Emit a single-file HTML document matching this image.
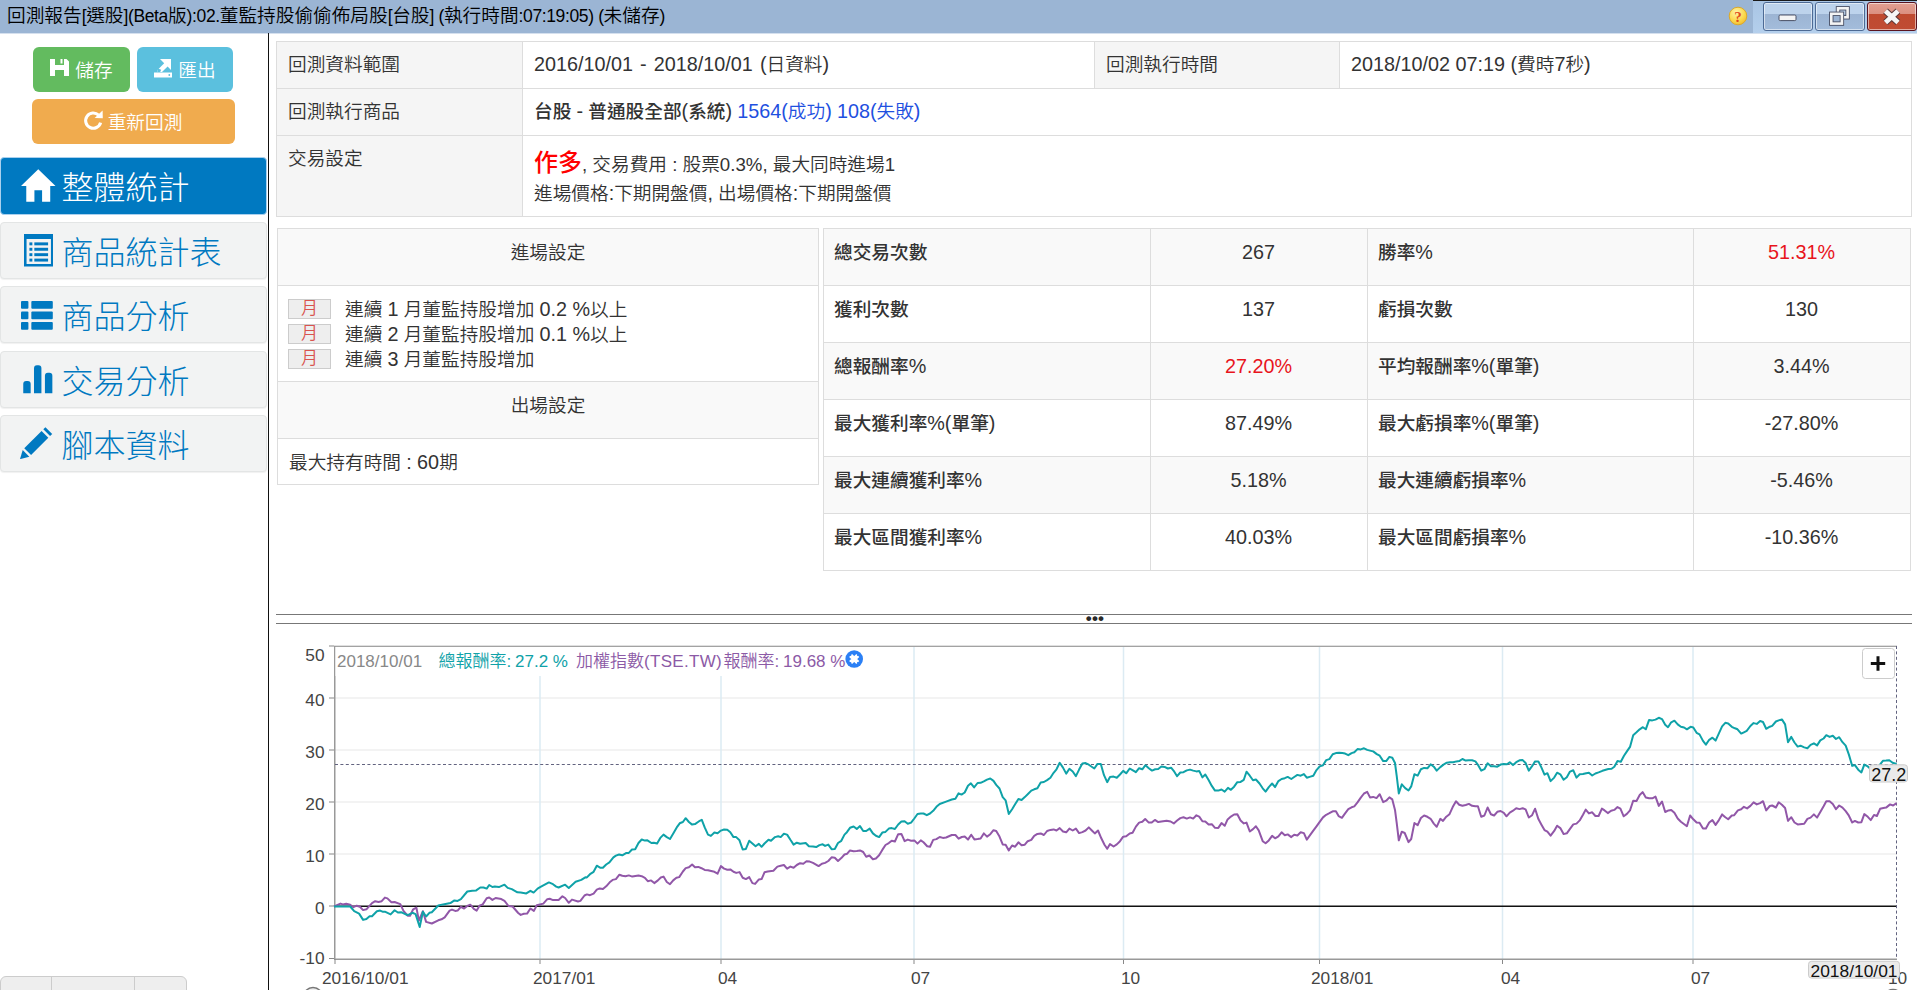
<!DOCTYPE html>
<html lang="zh-Hant"><head><meta charset="utf-8"><title>回測報告</title>
<style>
*{box-sizing:border-box;margin:0;padding:0}
html,body{width:1917px;height:990px;overflow:hidden;background:#fff}
body{position:relative;font-family:"Liberation Sans","Noto Sans CJK TC",sans-serif;color:#333;font-size:18.67px;font-weight:350}
.abs{position:absolute}
#titlebar{left:0;top:0;width:1917px;height:33px;background:#9bb5d4}
#titletext{left:7px;top:0;height:33px;line-height:32px;font-size:18.67px;color:#000;white-space:nowrap}
.t{font-size:17.5px;letter-spacing:-0.37px}
.e{font-size:1.06em}
#tbright{left:1753px;top:0;width:164px;height:33px;background:linear-gradient(#a9c5e4,#b4cfec);border-top:1px solid #1a1a1a}
.wbtn{top:2px;width:50px;height:29px;border:1px solid #4d6a94;border-radius:3px;box-shadow:inset 0 0 0 1px rgba(255,255,255,.55);background:linear-gradient(#bdd3ec 0,#bdd3ec 40%,#9cb4d3 41%,#a3bcdb 100%)}
#wclose{border-color:#5a1420;background:linear-gradient(#e2a092 0,#db8f80 40%,#bf4a30 41%,#c04c33 100%)}
#divider{left:268px;top:33px;width:1px;height:957px;background:#111}
.btn{color:#fff;border-radius:6px;height:45px;line-height:47px;text-align:center;font-size:18.67px;white-space:nowrap}
.nav{left:0;width:267px;height:57px;border:1px solid #e3e5e5;border-radius:4px;background:#f2f3f3;box-shadow:0 1px 1px rgba(0,0,0,.06);color:#0079c1;font-size:32px;font-weight:300;white-space:nowrap}
.nav.act{background:#0079c1;border-color:#a9d0ee;color:#fff;box-shadow:none;height:58px;margin-top:-1px}
.nav span{position:absolute;left:60.5px;top:1.5px;line-height:57px}
.nav svg{position:absolute}
table{border-collapse:collapse;position:absolute;table-layout:fixed}
td{border:1px solid #ddd;vertical-align:top;white-space:nowrap;overflow:hidden}
#t1 td{padding:9px 11px 0 11px;line-height:27px}
#t1 tr:first-child td:nth-child(2){word-spacing:1.6px}
#t1 td.l{background:#f5f5f5}
#t3 td{padding:10px 11px 0 10px;line-height:27px;height:57px}
#t3 td.l{font-weight:500}
b{font-weight:500}
#t3 td.v{text-align:center}
#t3 tr:nth-child(odd) td{background:#f9f9f9}
.red{color:#e8141c}
.mon{display:inline-block;width:43px;height:20px;border:1px solid #ccc;background:#eee;color:#d9534f;text-align:center;line-height:18px;font-size:17px;vertical-align:top;margin-right:14px;margin-top:2px}
</style></head><body>

<div id="titlebar" class="abs"></div><div class="abs" style="left:0;top:33px;width:1917px;height:1px;background:#d5e0ee"></div>
<div id="titletext" class="abs">回測報告<span class="t">[</span>選股<span class="t">](Beta</span>版<span class="t">):02.</span>董監持股偷偷佈局股<span class="t">[</span>台股<span class="t">] (</span>執行時間<span class="t">:07:19:05) (</span>未儲存<span class="t">)</span></div>
<div id="tbright" class="abs"></div>
<svg class="abs" style="left:1727px;top:5px" width="22" height="22" viewBox="0 0 22 22">
<defs><radialGradient id="qg" cx="0.4" cy="0.3" r="0.8"><stop offset="0" stop-color="#fff3a8"/><stop offset="0.6" stop-color="#fbd84c"/><stop offset="1" stop-color="#f0b429"/></radialGradient></defs>
<circle cx="11" cy="11" r="8.8" fill="url(#qg)" stroke="#dca92a" stroke-width="1"/>
<text x="11" y="16.5" text-anchor="middle" font-family="Liberation Serif,serif" font-weight="bold" font-size="15" fill="#e04a1c">?</text></svg>
<div class="abs wbtn" style="left:1763px"></div>
<div class="abs wbtn" style="left:1815px"></div>
<div class="abs wbtn" id="wclose" style="left:1867px"></div>
<svg class="abs" style="left:1763px;top:2px" width="154" height="29" viewBox="0 0 154 29">
<rect x="16" y="13" width="17" height="5.6" rx="1.2" fill="#f4f4f4" stroke="#4a5166" stroke-width="1"/>
<g fill="none" stroke="#4a5166" stroke-width="4.4"><rect x="75" y="6.3" width="9.6" height="9"/></g>
<g fill="none" stroke="#f4f4f4" stroke-width="2.6"><rect x="75" y="6.3" width="9.6" height="9"/></g>
<rect x="67" y="11" width="13" height="12" fill="#9cb4d3"/>
<g fill="none" stroke="#4a5166" stroke-width="4.4"><rect x="68.3" y="11.8" width="10.6" height="9.8"/></g>
<g fill="none" stroke="#f4f4f4" stroke-width="2.6"><rect x="68.3" y="11.8" width="10.6" height="9.8"/></g>
<g stroke-linecap="butt"><path d="M122.5 9 L135 20.5 M135 9 L122.5 20.5" stroke="#5b3a3a" stroke-width="6.8" fill="none"/><path d="M122.5 9 L135 20.5 M135 9 L122.5 20.5" stroke="#f6f6f6" stroke-width="4.8" fill="none"/></g>
</svg>

<div id="divider" class="abs"></div>
<div class="abs btn" style="left:33px;top:47px;width:97px;background:#63bb5f"><span style="margin-left:25px">儲存</span></div>
<svg class="abs" style="left:50px;top:59px" width="19" height="17" viewBox="0 0 19 17"><path d="M0 0H5V6H14V0H16.5L19 2.5V17H14V11H5V17H0Z M10.5 0H12.5V4.5H10.5Z" fill="#fff"/></svg>
<div class="abs btn" style="left:137px;top:47px;width:96px;background:#5bc0de"><span style="margin-left:24px">匯出</span></div>
<svg class="abs" style="left:154px;top:59px" width="19" height="19" viewBox="0 0 19 19"><path d="M0 13.5H18V18.5H0Z" fill="#fff"/><circle cx="15.3" cy="16" r="0.9" fill="#5bc0de"/><path d="M6 0H17V11L13.6 7.6L8 13H3.5V11L10.2 4.2Z" fill="#fff"/><path d="M3.5 9.2L7.2 10.8L6.2 13H3.5Z" fill="#5bc0de"/></svg>
<div class="abs btn" style="left:32px;top:99px;width:203px;background:#f0ab4e"><span style="margin-left:23px">重新回測</span></div>
<svg class="abs" style="left:83px;top:110px" width="21" height="21" viewBox="0 0 21 21"><path d="M17.6 12.6A7.6 7.6 0 1 1 15.6 5.2" fill="none" stroke="#fff" stroke-width="3.1"/><path d="M11.6 8L19.8 8.2L19.6 0.4Z" fill="#fff"/></svg>

<div class="abs nav act" style="top:158px"><svg style="left:20px;top:10.5px" width="34.5" height="33" viewBox="0 0 36 34"><path d="M18 0L36 17.5H30.5V34H22V22H14V34H5.5V17.5H0Z" fill="#fff"/></svg><span>整體統計</span></div>
<div class="abs nav" style="top:222px"><svg style="left:22.5px;top:11px" width="29.5" height="32.5" viewBox="0 0 30 33"><path d="M0 0H30V33H0Z M2.6 5H27.4V30.4H2.6Z" fill="#0079c1" fill-rule="evenodd"/><g fill="#0079c1"><rect x="5.5" y="8.5" width="3" height="3"/><rect x="10.5" y="8.5" width="14" height="3"/><rect x="5.5" y="14" width="3" height="3"/><rect x="10.5" y="14" width="14" height="3"/><rect x="5.5" y="19.5" width="3" height="3"/><rect x="10.5" y="19.5" width="14" height="3"/><rect x="5.5" y="25" width="3" height="3"/><rect x="10.5" y="25" width="14" height="3"/></g></svg><span>商品統計表</span></div>
<div class="abs nav" style="top:286px"><svg style="left:20px;top:14px" width="32.2" height="29.3" viewBox="0 0 33 30"><g fill="#0079c1"><rect x="0" y="0" width="7.6" height="7.8" rx="1"/><rect x="10.6" y="0" width="22" height="7.8" rx="1"/><rect x="0" y="10.8" width="7.6" height="7.8" rx="1"/><rect x="10.6" y="10.8" width="22" height="7.8" rx="1"/><rect x="0" y="21.6" width="7.6" height="7.8" rx="1"/><rect x="10.6" y="21.6" width="22" height="7.8" rx="1"/></g></svg><span>商品分析</span></div>
<div class="abs nav" style="top:351px"><svg style="left:22.3px;top:13px" width="29.8" height="29.3" viewBox="0 0 30 30"><g fill="#0079c1"><path d="M0 29V19.5Q0 16.5 3 16.5H4.6Q7.6 16.5 7.6 19.5V29Z"/><path d="M11 29V3.5Q11 0.3 14 0.3H15.6Q18.6 0.3 18.6 3.5V29Z"/><path d="M22.2 29V11Q22.2 8 25.2 8H26.8Q29.8 8 29.8 11V29Z"/></g></svg><span>交易分析</span></div>
<div class="abs nav" style="top:415px"><svg style="left:19.3px;top:11px" width="33" height="32.3" viewBox="0 0 34 33"><g fill="#0079c1"><path d="M0 33L2.8 23.6L9.6 30.4Z"/><path d="M4.4 21.8L22.2 4L29.2 11L11.4 28.8Z"/><path d="M24 2.2L26.2 0L33.2 7L31 9.2Z"/></g></svg><span>腳本資料</span></div>

<div class="abs" style="left:0;top:976px;width:187px;height:30px;border:1px solid #ccc;border-radius:6px;background:#eee"></div>
<div class="abs" style="left:51px;top:976px;width:1px;height:20px;background:#ccc"></div>
<div class="abs" style="left:134px;top:976px;width:1px;height:20px;background:#ccc"></div>

<table id="t1" style="left:276px;top:41px;width:1635px">
<colgroup><col style="width:246px"><col style="width:572px"><col style="width:245px"><col style="width:572px"></colgroup>
<tr style="height:47px"><td class="l">回測資料範圍</td><td><span class="e">2016/10/01 - 2018/10/01 (</span>日資料<span class="e">)</span></td><td class="l">回測執行時間</td><td><span class="e">2018/10/02 07:19 (</span>費時<span class="e">7</span>秒<span class="e">)</span></td></tr>
<tr style="height:47px"><td class="l">回測執行商品</td><td colspan="3"><b>台股 <span class="e">-</span> 普通股全部<span class="e">(</span>系統<span class="e">)</span></b> <span style="color:#1e50e0"><span class="e">1564(</span>成功<span class="e">)</span></span> <span style="color:#1e50e0"><span class="e">108(</span>失敗<span class="e">)</span></span></td></tr>
<tr style="height:81px"><td class="l">交易設定</td><td colspan="3" style="padding-top:12px"><div style="line-height:30px"><b class="red" style="font-size:24px;color:#f00">作多</b>, 交易費用 : 股票0.3%, 最大同時進場1</div><div style="line-height:27px">進場價格<span class="e">:</span>下期開盤價<span class="e">,</span> 出場價格<span class="e">:</span>下期開盤價</div></td></tr>
</table>

<div class="abs" style="left:277px;top:228px;width:542px;height:257px;border:1px solid #ddd;background:#fff">
 <div style="height:57px;background:#f9f9f9;border-bottom:1px solid #ddd;text-align:center;line-height:27px;padding-top:10px">進場設定</div>
 <div style="height:96px;border-bottom:1px solid #ddd;padding:11px 0 0 10px;line-height:25px">
  <div><span class="mon">月</span>連續 <span class="e">1</span> 月董監持股增加 <span class="e">0.2 %</span>以上</div>
  <div><span class="mon">月</span>連續 <span class="e">2</span> 月董監持股增加 <span class="e">0.1 %</span>以上</div>
  <div><span class="mon">月</span>連續 <span class="e">3</span> 月董監持股增加</div>
 </div>
 <div style="height:57px;background:#f9f9f9;border-bottom:1px solid #ddd;text-align:center;line-height:27px;padding-top:10px">出場設定</div>
 <div style="padding:10px 0 0 11px;line-height:27px">最大持有時間 <span class="e">: 60</span>期</div>
</div>

<table id="t3" style="left:823px;top:228px;width:1087px">
<colgroup><col style="width:327px"><col style="width:217px"><col style="width:326px"><col style="width:217px"></colgroup>
<tr><td class="l">總交易次數</td><td class="v"><span class="e">267</span></td><td class="l">勝率<span class="e">%</span></td><td class="v red"><span class="e">51.31%</span></td></tr>
<tr><td class="l">獲利次數</td><td class="v"><span class="e">137</span></td><td class="l">虧損次數</td><td class="v"><span class="e">130</span></td></tr>
<tr><td class="l">總報酬率<span class="e">%</span></td><td class="v red"><span class="e">27.20%</span></td><td class="l">平均報酬率<span class="e">%(</span>單筆<span class="e">)</span></td><td class="v"><span class="e">3.44%</span></td></tr>
<tr><td class="l">最大獲利率<span class="e">%(</span>單筆<span class="e">)</span></td><td class="v"><span class="e">87.49%</span></td><td class="l">最大虧損率<span class="e">%(</span>單筆<span class="e">)</span></td><td class="v"><span class="e">-27.80%</span></td></tr>
<tr><td class="l">最大連續獲利率<span class="e">%</span></td><td class="v"><span class="e">5.18%</span></td><td class="l">最大連續虧損率<span class="e">%</span></td><td class="v"><span class="e">-5.46%</span></td></tr>
<tr><td class="l">最大區間獲利率<span class="e">%</span></td><td class="v"><span class="e">40.03%</span></td><td class="l">最大區間虧損率<span class="e">%</span></td><td class="v"><span class="e">-10.36%</span></td></tr>
</table>

<div class="abs" style="left:276px;top:614px;width:1636px;height:1px;background:#777"></div>
<div class="abs" style="left:276px;top:623px;width:1636px;height:1px;background:#777"></div>
<div class="abs" style="left:1080px;top:610px;width:30px;height:18px;line-height:18px;text-align:center;font-size:17px;font-weight:bold;color:#2a2a2a;letter-spacing:0.2px;white-space:nowrap">•••</div>
<svg class="abs" style="left:0;top:0" width="1917" height="990" viewBox="0 0 1917 990" font-family="Liberation Sans, Noto Sans CJK TC, sans-serif">
<rect x="335" y="697.2" width="1562" height="1.6" fill="#f0f0f0"/>
<rect x="335" y="749.2" width="1562" height="1.6" fill="#f0f0f0"/>
<rect x="335" y="801.2" width="1562" height="1.6" fill="#f0f0f0"/>
<rect x="335" y="853.2" width="1562" height="1.6" fill="#f0f0f0"/>
<rect x="539.25" y="647" width="1.5" height="312" fill="#dcebf3"/>
<rect x="539.5" y="959" width="1" height="5" fill="#888"/>
<rect x="720.25" y="647" width="1.5" height="312" fill="#dcebf3"/>
<rect x="720.5" y="959" width="1" height="5" fill="#888"/>
<rect x="913.25" y="647" width="1.5" height="312" fill="#dcebf3"/>
<rect x="913.5" y="959" width="1" height="5" fill="#888"/>
<rect x="1122.75" y="647" width="1.5" height="312" fill="#dcebf3"/>
<rect x="1123.0" y="959" width="1" height="5" fill="#888"/>
<rect x="1318.75" y="647" width="1.5" height="312" fill="#dcebf3"/>
<rect x="1319.0" y="959" width="1" height="5" fill="#888"/>
<rect x="1501.75" y="647" width="1.5" height="312" fill="#dcebf3"/>
<rect x="1502.0" y="959" width="1" height="5" fill="#888"/>
<rect x="1692.25" y="647" width="1.5" height="312" fill="#dcebf3"/>
<rect x="1692.5" y="959" width="1" height="5" fill="#888"/>
<rect x="334" y="645.7" width="1563" height="1.2" fill="#999"/>
<rect x="334" y="646" width="1.5" height="314" fill="#999"/>
<rect x="334" y="958.5" width="1563" height="1.5" fill="#999"/>
<rect x="334.5" y="959" width="1" height="5" fill="#888"/>
<rect x="329" y="645.5" width="5" height="1" fill="#888"/>
<rect x="329" y="697.5" width="5" height="1" fill="#888"/>
<rect x="329" y="749.5" width="5" height="1" fill="#888"/>
<rect x="329" y="801.5" width="5" height="1" fill="#888"/>
<rect x="329" y="853.5" width="5" height="1" fill="#888"/>
<rect x="329" y="905.5" width="5" height="1" fill="#888"/>
<rect x="329" y="958.0" width="5" height="1" fill="#888"/>
<rect x="335" y="905.5" width="1562" height="1.5" fill="#111"/>
<path d="M335 764.5H1897" stroke="#62637f" stroke-width="1" stroke-dasharray="3 2.4" fill="none"/>
<path d="M1896.5 646V959" stroke="#62637f" stroke-width="1" stroke-dasharray="3 2.4" fill="none"/>
<path d="M334.0,906.5 L340.5,903.6 L342.9,904.4 L346.2,903.8 L350.2,904.7 L353.4,907.2 L356.7,905.7 L359.9,906.8 L363.1,910.1 L366.4,909.3 L372.0,903.1 L375.2,901.2 L378.5,902.0 L381.7,901.2 L384.9,897.6 L387.4,898.4 L391.4,902.3 L394.6,902.0 L400.3,904.1 L403.5,910.9 L407.6,915.7 L410.0,915.7 L413.2,909.3 L416.4,907.6 L418.9,920.6 L422.9,911.2 L426.1,921.9 L431.8,923.5 L438.3,920.3 L441.5,919.3 L444.7,917.3 L449.6,910.6 L452.0,909.6 L455.2,910.9 L457.6,910.6 L460.9,906.8 L464.1,908.5 L467.3,906.0 L470.3,904.7 L473.8,908.9 L476.7,910.6 L479.5,905.7 L482.7,904.4 L486.7,898.3 L489.2,897.5 L492.4,899.9 L495.6,898.0 L501.3,899.1 L504.5,900.9 L508.5,906.0 L512.6,906.5 L518.2,913.0 L520.7,914.9 L523.9,913.8 L527.1,913.6 L530.4,908.5 L533.9,910.9 L536.8,905.2 L543.3,903.6 L547.3,899.2 L549.7,898.8 L553.0,900.1 L558.6,899.9 L562.4,896.3 L565.1,898.0 L568.8,902.8 L572.0,899.6 L578.0,901.5 L580.4,900.9 L584.5,895.5 L586.9,894.4 L590.0,895.2 L593.6,893.6 L596.8,889.6 L599.7,888.4 L602.9,889.1 L606.2,886.3 L609.7,882.3 L612.6,879.9 L615.9,879.1 L619.4,874.7 L622.3,875.8 L625.5,876.3 L628.8,875.4 L632.3,876.6 L638.5,875.5 L641.7,876.2 L644.9,877.8 L647.8,881.2 L651.1,880.4 L654.3,883.1 L657.9,880.4 L660.8,877.5 L663.5,876.6 L666.8,882.0 L670.0,884.2 L673.2,880.4 L676.4,877.8 L679.2,877.1 L682.9,871.5 L685.7,868.1 L688.9,867.3 L692.1,864.5 L695.0,867.3 L698.3,866.9 L701.5,868.2 L704.7,869.9 L708.0,870.2 L711.2,871.0 L714.4,871.8 L717.6,873.7 L720.9,866.1 L724.1,868.6 L727.3,869.7 L730.3,869.4 L733.5,871.8 L736.2,872.9 L739.5,872.1 L742.7,877.8 L745.9,879.1 L749.2,877.1 L752.4,883.1 L755.1,883.9 L758.9,879.4 L761.6,879.1 L764.5,872.3 L767.7,871.5 L773.4,870.7 L777.4,866.6 L780.7,865.7 L783.9,865.0 L787.1,868.6 L790.4,866.6 L793.6,867.8 L796.8,865.0 L800.1,863.2 L803.3,863.7 L806.5,861.3 L809.7,861.6 L813.0,862.9 L818.6,866.1 L821.9,863.7 L825.1,862.9 L828.3,861.0 L831.6,857.3 L834.8,857.7 L838.0,861.0 L841.3,858.1 L844.5,854.5 L847.2,853.7 L850.0,850.4 L853.6,851.2 L856.8,850.9 L860.0,850.4 L863.2,852.0 L866.2,856.8 L869.4,855.5 L872.9,859.3 L875.9,858.5 L879.1,855.2 L882.3,849.9 L885.5,845.0 L888.8,843.1 L891.7,840.7 L894.9,841.5 L898.2,834.2 L901.4,833.9 L904.6,841.2 L907.8,839.6 L911.1,840.7 L914.3,840.4 L917.5,843.6 L920.8,840.4 L923.5,842.3 L927.2,846.3 L930.0,846.7 L933.2,839.9 L936.4,839.1 L939.7,837.0 L942.9,837.9 L946.1,837.5 L951.8,835.0 L955.4,835.0 L958.6,838.7 L961.8,837.0 L964.7,836.6 L968.0,839.6 L971.2,834.7 L974.4,839.4 L977.6,839.1 L980.6,838.6 L983.8,833.4 L987.0,836.6 L990.3,834.2 L993.5,830.2 L996.2,831.0 L999.5,836.6 L1002.7,844.4 L1005.6,844.7 L1008.8,850.4 L1012.1,845.5 L1015.1,846.7 L1018.4,842.3 L1021.6,845.2 L1024.8,844.7 L1027.7,841.2 L1031.3,839.9 L1034.2,835.8 L1037.4,833.9 L1040.7,833.4 L1043.9,835.0 L1047.1,831.0 L1050.4,829.9 L1053.6,829.4 L1056.5,830.5 L1059.7,828.1 L1063.0,831.5 L1066.2,832.3 L1069.4,828.6 L1072.7,830.5 L1075.9,828.6 L1079.1,833.1 L1082.4,832.1 L1085.6,830.5 L1088.8,827.4 L1091.6,830.2 L1094.8,833.4 L1098.0,830.5 L1101.3,838.3 L1104.5,844.7 L1107.2,848.8 L1110.0,844.1 L1113.6,846.5 L1116.8,844.4 L1120.0,841.2 L1123.2,836.7 L1126.2,836.3 L1129.7,833.4 L1132.6,832.8 L1135.9,826.6 L1139.1,822.6 L1142.3,821.8 L1145.2,819.0 L1148.8,822.6 L1151.7,822.6 L1154.9,819.9 L1158.2,822.1 L1161.4,821.5 L1166.6,820.7 L1170.6,821.5 L1173.8,823.4 L1177.1,820.5 L1180.3,818.1 L1183.5,817.3 L1186.8,818.6 L1190.0,817.4 L1193.2,818.6 L1196.4,815.3 L1199.2,816.6 L1202.4,821.3 L1205.3,821.5 L1208.6,824.5 L1211.8,824.2 L1215.0,827.8 L1218.3,827.9 L1221.5,823.1 L1224.7,825.8 L1227.6,819.4 L1230.9,816.6 L1234.1,814.5 L1237.3,814.2 L1240.6,820.5 L1243.8,823.4 L1246.5,822.6 L1249.8,831.5 L1253.0,829.1 L1255.9,826.3 L1258.7,830.4 L1262.7,841.2 L1265.6,843.3 L1268.8,840.4 L1272.1,835.9 L1275.1,838.3 L1278.4,836.3 L1281.6,832.3 L1284.8,835.2 L1287.7,834.4 L1291.3,837.1 L1294.2,834.7 L1297.4,835.5 L1300.7,832.3 L1303.9,833.1 L1306.8,839.6 L1310.4,834.7 L1313.3,830.7 L1316.5,826.3 L1319.7,821.8 L1323.0,817.4 L1326.2,814.8 L1329.4,813.2 L1332.7,811.3 L1335.9,811.3 L1338.6,816.1 L1341.9,817.8 L1345.1,813.4 L1348.3,809.2 L1351.6,807.3 L1354.3,806.4 L1357.5,802.4 L1360.8,797.6 L1364.0,793.5 L1367.2,791.9 L1370.0,797.4 L1373.2,796.9 L1376.5,798.1 L1379.7,794.2 L1383.2,802.1 L1386.2,800.7 L1389.4,797.4 L1392.3,799.4 L1395.0,809.9 L1396.7,822.8 L1398.8,840.3 L1401.8,831.7 L1404.7,833.0 L1408.5,842.2 L1411.2,839.0 L1414.4,823.1 L1417.7,825.2 L1420.9,818.0 L1424.1,815.5 L1427.4,816.8 L1430.6,818.8 L1433.8,823.6 L1436.7,826.8 L1440.3,818.8 L1443.0,820.9 L1446.3,816.7 L1449.5,814.2 L1452.7,807.1 L1456.0,801.3 L1459.2,804.7 L1462.4,805.8 L1465.7,805.0 L1468.9,803.9 L1472.1,805.8 L1475.4,806.2 L1477.9,806.2 L1481.2,816.7 L1484.4,815.5 L1487.6,807.5 L1490.9,814.2 L1494.1,815.5 L1497.3,811.8 L1500.6,811.0 L1503.8,812.8 L1506.5,816.3 L1509.8,812.6 L1513.0,810.7 L1516.2,808.3 L1519.5,809.1 L1522.7,808.3 L1525.6,809.4 L1528.8,817.5 L1532.1,815.2 L1535.1,808.7 L1538.4,819.1 L1541.6,824.9 L1544.5,830.1 L1547.4,831.7 L1550.6,835.7 L1554.2,830.9 L1557.1,825.7 L1560.3,828.1 L1563.6,834.1 L1566.8,833.3 L1570.0,828.9 L1573.3,824.4 L1576.5,823.6 L1579.7,820.4 L1583.0,814.7 L1585.7,809.6 L1588.9,813.4 L1592.2,812.3 L1595.4,816.0 L1598.6,816.0 L1601.9,808.6 L1604.6,810.4 L1607.8,813.1 L1611.1,810.7 L1614.3,809.9 L1617.5,807.1 L1620.4,808.7 L1623.7,816.3 L1626.9,813.9 L1630.0,810.4 L1633.2,800.7 L1636.5,801.0 L1639.7,795.0 L1642.6,792.1 L1645.8,797.5 L1649.1,798.3 L1652.3,798.3 L1655.5,796.6 L1658.8,805.9 L1662.0,801.5 L1665.2,812.0 L1668.5,810.4 L1671.2,809.9 L1674.4,812.8 L1677.7,818.5 L1680.9,821.7 L1686.9,826.2 L1690.1,815.5 L1693.3,819.3 L1696.6,822.5 L1699.5,822.8 L1703.0,828.5 L1705.9,828.6 L1709.2,822.5 L1712.4,820.1 L1715.6,824.9 L1718.9,820.1 L1722.1,814.4 L1725.3,817.2 L1728.2,819.3 L1731.8,815.5 L1734.2,815.2 L1737.9,810.4 L1741.2,809.2 L1743.9,806.8 L1747.1,808.4 L1750.4,805.9 L1753.6,802.3 L1756.8,804.4 L1760.1,803.1 L1763.0,801.2 L1766.2,810.4 L1769.8,806.0 L1772.2,805.5 L1775.9,807.5 L1778.7,802.3 L1781.9,804.7 L1785.1,808.0 L1788.0,820.9 L1791.3,817.2 L1794.5,822.5 L1797.7,824.4 L1804.2,823.8 L1807.4,818.9 L1810.6,817.6 L1813.9,814.4 L1817.1,817.6 L1820.3,812.0 L1823.6,806.3 L1826.3,801.2 L1829.6,801.2 L1832.8,803.9 L1836.0,809.2 L1839.2,805.5 L1842.5,807.6 L1845.7,811.2 L1848.9,815.7 L1852.2,822.5 L1854.9,820.9 L1858.2,822.5 L1861.4,822.2 L1864.3,814.1 L1867.8,816.8 L1870.8,820.1 L1874.0,814.9 L1876.9,816.0 L1880.1,808.8 L1883.4,808.0 L1886.1,807.6 L1890.1,804.4 L1893.1,805.5 L1896.6,803.1" fill="none" stroke="#9157a8" stroke-width="2" stroke-linejoin="round"/>
<path d="M334.0,906.5 L350.2,906.5 L354.2,911.2 L359.1,913.6 L363.1,919.9 L366.4,919.0 L369.6,916.2 L372.0,916.2 L376.9,911.2 L380.1,910.6 L382.5,911.7 L384.9,911.7 L390.6,914.4 L394.6,910.2 L397.9,912.5 L401.1,912.2 L406.8,914.9 L409.2,914.4 L412.4,912.8 L415.6,914.1 L419.7,927.0 L422.9,911.7 L426.1,916.5 L429.4,912.8 L431.8,912.2 L438.3,905.5 L443.1,904.4 L450.4,903.1 L454.4,900.4 L457.6,900.9 L460.9,899.2 L467.3,891.5 L472.2,890.7 L476.2,890.4 L480.3,887.5 L483.5,887.5 L486.7,888.6 L489.2,885.0 L492.4,887.0 L494.8,886.6 L498.9,887.1 L504.5,884.7 L507.7,887.9 L511.8,889.1 L517.4,892.3 L520.7,892.6 L526.3,893.4 L530.4,890.8 L533.6,892.6 L537.6,888.6 L540.1,887.1 L548.9,882.4 L553.0,884.2 L556.2,886.6 L558.6,887.5 L565.1,884.7 L568.8,887.9 L575.6,881.8 L581.3,879.9 L585.3,877.3 L586.9,877.4 L590.0,874.2 L593.6,871.8 L596.8,865.7 L600.5,867.8 L602.9,867.8 L606.2,864.5 L609.4,862.4 L613.4,857.3 L615.9,855.6 L619.1,854.5 L622.3,855.3 L626.4,852.9 L628.8,852.9 L632.0,849.5 L635.2,849.2 L638.5,843.0 L641.7,839.5 L644.9,840.6 L647.4,840.3 L651.4,843.0 L653.8,842.7 L657.1,843.5 L660.3,837.9 L663.5,834.6 L666.8,837.1 L670.0,839.0 L674.0,832.2 L677.3,826.6 L679.7,823.3 L682.9,822.0 L685.7,818.2 L688.9,822.0 L692.1,824.6 L695.0,824.1 L699.1,821.2 L701.8,819.8 L704.7,827.4 L708.0,834.6 L710.9,835.9 L714.4,832.5 L717.6,833.3 L720.9,830.6 L724.1,829.5 L727.3,829.8 L730.3,832.2 L733.5,837.1 L736.2,837.1 L739.5,840.3 L742.7,849.5 L745.9,848.9 L749.2,840.8 L752.4,843.5 L755.6,846.3 L758.9,843.8 L761.6,846.8 L764.5,843.5 L768.5,839.8 L771.0,840.8 L775.0,837.1 L778.2,836.2 L780.7,837.1 L783.9,833.8 L787.1,834.6 L790.4,839.8 L793.6,844.6 L796.8,842.7 L800.1,843.8 L805.7,843.0 L808.9,846.3 L813.0,846.4 L816.2,847.1 L819.4,845.1 L822.7,844.3 L825.1,845.9 L828.3,844.6 L831.6,849.2 L834.8,848.9 L838.0,843.0 L841.3,840.8 L844.5,834.6 L846.9,832.2 L850.0,827.8 L853.6,826.5 L856.8,828.9 L860.0,826.1 L863.2,831.0 L866.2,831.0 L869.7,828.6 L872.9,833.4 L875.9,835.8 L879.1,837.1 L882.3,832.6 L885.2,832.1 L888.8,828.6 L891.7,828.1 L894.9,829.0 L898.2,824.5 L901.4,821.6 L904.6,821.3 L907.8,823.7 L911.1,822.6 L914.3,818.5 L917.5,814.0 L920.8,813.5 L923.5,813.5 L926.8,815.2 L930.0,813.5 L933.2,810.8 L936.4,806.8 L939.7,804.0 L946.1,801.6 L951.8,799.5 L955.4,798.7 L958.6,793.3 L961.5,794.6 L964.7,792.5 L968.0,785.7 L970.9,783.3 L974.1,787.4 L977.6,783.0 L980.6,782.8 L983.8,781.4 L987.0,779.6 L990.3,778.5 L993.5,780.9 L996.2,784.9 L999.5,788.5 L1002.7,797.1 L1005.6,800.3 L1008.8,814.0 L1012.1,809.2 L1015.1,804.3 L1018.4,799.0 L1021.6,800.0 L1024.8,797.1 L1027.7,794.3 L1031.3,790.6 L1034.2,789.3 L1037.4,788.2 L1040.7,782.5 L1043.9,782.0 L1047.1,780.1 L1050.4,777.7 L1053.6,772.8 L1056.5,769.3 L1059.7,762.8 L1063.0,767.6 L1066.2,773.6 L1069.4,768.8 L1072.7,771.5 L1075.9,776.1 L1079.1,769.6 L1082.4,763.6 L1085.6,763.1 L1088.8,764.7 L1094.3,768.5 L1097.5,763.9 L1100.8,763.9 L1104.0,775.2 L1107.2,782.2 L1110.0,777.0 L1113.6,776.6 L1116.8,777.7 L1120.0,774.5 L1123.2,770.9 L1126.2,773.3 L1129.7,768.5 L1132.9,770.4 L1135.9,772.2 L1139.1,768.2 L1142.3,769.3 L1145.5,765.2 L1148.8,768.2 L1152.0,770.6 L1155.2,769.3 L1158.2,769.0 L1161.4,766.5 L1164.6,766.9 L1167.8,768.5 L1171.1,767.7 L1174.3,771.7 L1177.1,776.2 L1180.3,772.5 L1183.5,772.2 L1186.8,770.4 L1190.0,769.6 L1193.2,770.6 L1196.4,771.4 L1199.2,770.9 L1202.4,777.4 L1205.3,774.5 L1208.6,780.1 L1211.8,785.9 L1215.0,790.6 L1218.3,790.6 L1221.5,789.5 L1224.7,791.6 L1228.0,787.9 L1230.9,789.8 L1234.1,786.7 L1237.3,782.2 L1240.6,781.9 L1243.8,779.8 L1246.5,771.7 L1249.8,775.7 L1253.0,780.3 L1255.9,779.5 L1259.5,783.5 L1262.7,788.3 L1265.6,791.6 L1268.8,787.1 L1272.1,783.5 L1275.1,787.1 L1278.4,781.1 L1281.6,779.0 L1284.8,778.2 L1287.7,776.9 L1291.3,779.0 L1294.2,777.0 L1297.4,774.9 L1300.7,775.7 L1303.9,774.1 L1306.8,777.7 L1310.4,776.6 L1313.3,775.7 L1316.5,770.1 L1319.7,766.4 L1323.0,765.2 L1326.2,760.1 L1329.4,759.1 L1332.7,754.3 L1335.9,753.1 L1339.1,752.8 L1342.4,753.1 L1345.1,753.6 L1348.3,755.2 L1351.6,753.1 L1354.3,752.3 L1357.5,749.1 L1360.8,749.4 L1364.0,748.3 L1367.2,749.9 L1370.0,750.6 L1373.2,751.4 L1376.8,754.1 L1379.7,755.7 L1383.2,761.1 L1386.2,761.1 L1389.4,756.9 L1392.3,757.8 L1395.0,763.0 L1396.7,775.9 L1398.8,793.4 L1401.8,784.3 L1405.2,788.1 L1408.5,790.5 L1411.2,786.4 L1414.4,774.3 L1417.7,775.6 L1420.9,769.2 L1424.1,767.9 L1427.4,768.3 L1430.6,764.3 L1433.8,766.7 L1436.7,770.6 L1440.3,767.1 L1443.5,764.6 L1446.8,762.7 L1450.0,762.2 L1453.2,762.2 L1456.4,761.4 L1459.2,761.1 L1462.4,759.0 L1465.7,760.6 L1468.9,760.3 L1472.1,760.3 L1475.4,761.4 L1478.3,765.4 L1481.2,770.6 L1484.4,769.2 L1487.6,763.3 L1490.9,766.2 L1494.1,766.2 L1497.3,766.7 L1500.6,764.6 L1503.8,764.1 L1507.0,764.3 L1509.8,762.2 L1513.0,765.1 L1516.2,762.2 L1519.5,760.3 L1522.7,760.1 L1525.6,763.0 L1528.8,770.6 L1532.1,766.2 L1535.1,761.4 L1538.4,761.4 L1541.6,767.9 L1544.5,774.6 L1547.4,773.2 L1550.6,781.1 L1554.2,777.6 L1557.1,772.7 L1560.3,774.3 L1563.6,779.7 L1566.8,777.2 L1570.0,771.6 L1573.3,770.3 L1576.5,777.6 L1579.7,774.3 L1583.0,774.0 L1586.2,773.2 L1588.9,772.7 L1592.2,775.5 L1595.4,773.5 L1598.6,772.4 L1602.4,770.8 L1608.3,769.0 L1611.6,768.7 L1614.3,766.7 L1617.5,761.1 L1620.8,761.7 L1624.0,755.7 L1626.9,751.4 L1630.0,746.9 L1633.2,735.2 L1636.5,732.3 L1639.7,729.3 L1642.9,727.2 L1645.8,729.3 L1649.1,719.9 L1652.3,720.4 L1655.5,719.6 L1658.8,717.8 L1662.0,719.1 L1665.2,724.7 L1668.0,727.2 L1671.2,722.3 L1674.4,720.7 L1677.7,724.4 L1680.9,726.8 L1684.1,727.5 L1686.9,729.3 L1690.6,726.8 L1693.3,727.5 L1696.6,732.8 L1699.5,734.4 L1703.0,740.9 L1705.9,744.6 L1709.2,739.8 L1712.4,737.7 L1715.6,740.6 L1718.9,733.3 L1722.1,726.4 L1725.3,722.8 L1728.2,723.4 L1731.8,726.8 L1735.0,728.3 L1737.5,729.3 L1741.2,733.6 L1743.9,732.3 L1746.7,730.9 L1750.4,726.0 L1753.6,723.1 L1756.8,723.9 L1760.1,721.0 L1763.0,722.0 L1766.2,728.8 L1769.8,726.7 L1772.2,725.9 L1775.9,721.5 L1778.7,720.4 L1781.9,719.4 L1785.1,724.4 L1788.0,742.2 L1791.3,736.9 L1794.5,742.5 L1797.7,746.6 L1800.5,745.7 L1804.2,747.4 L1807.4,748.2 L1810.6,744.9 L1813.9,743.3 L1817.1,745.4 L1820.3,740.4 L1823.6,738.5 L1826.3,735.2 L1829.6,736.9 L1832.8,735.7 L1836.0,739.0 L1839.2,737.2 L1842.5,742.2 L1845.7,745.7 L1848.9,754.6 L1852.2,765.9 L1854.9,765.1 L1858.2,769.7 L1861.4,772.4 L1864.3,764.6 L1867.8,766.4 L1870.8,769.2 L1874.0,770.8 L1876.9,770.0 L1879.6,765.1 L1882.9,760.8 L1886.1,760.6 L1889.3,760.3 L1892.6,762.7 L1896.6,764.0" fill="none" stroke="#0fa2a8" stroke-width="2" stroke-linejoin="round"/>
<text x="324.6" y="661" text-anchor="end" font-size="17.3" fill="#444">50</text>
<text x="324.6" y="705.5" text-anchor="end" font-size="17.3" fill="#444">40</text>
<text x="324.6" y="757.5" text-anchor="end" font-size="17.3" fill="#444">30</text>
<text x="324.6" y="809.5" text-anchor="end" font-size="17.3" fill="#444">20</text>
<text x="324.6" y="861.5" text-anchor="end" font-size="17.3" fill="#444">10</text>
<text x="324.6" y="913.5" text-anchor="end" font-size="17.3" fill="#444">0</text>
<text x="324.6" y="964" text-anchor="end" font-size="17.3" fill="#444">-10</text>
<text x="322" y="984" font-size="17.3" fill="#444">2016/10/01</text>
<text x="533" y="984" font-size="17.3" fill="#444">2017/01</text>
<text x="718" y="984" font-size="17.3" fill="#444">04</text>
<text x="911" y="984" font-size="17.3" fill="#444">07</text>
<text x="1121" y="984" font-size="17.3" fill="#444">10</text>
<text x="1311" y="984" font-size="17.3" fill="#444">2018/01</text>
<text x="1501" y="984" font-size="17.3" fill="#444">04</text>
<text x="1691" y="984" font-size="17.3" fill="#444">07</text>
<text x="1888" y="984" font-size="17.3" fill="#444">10</text>
<rect x="335.5" y="647" width="530" height="29" fill="#fff"/>
<text x="337" y="667" font-size="17" fill="#888">2018/10/01</text>
<text x="438.5" y="667" font-size="17" fill="#0fa2a8">總報酬率:</text><text x="515" y="667" font-size="17" fill="#0fa2a8">27.2 %</text>
<text x="576" y="667" font-size="17" fill="#8c5aa6">加權指數</text><text x="644" y="667" font-size="17" letter-spacing="0.3" fill="#8c5aa6">(TSE.TW)</text><text x="723.5" y="667" font-size="17" fill="#8c5aa6">報酬率:</text><text x="783" y="667" font-size="17" fill="#8c5aa6">19.68 %</text>
<circle cx="854.2" cy="659" r="8.8" fill="#2b80f5"/><path d="M850.6 655.4L857.8 662.6M857.8 655.4L850.6 662.6" stroke="#fff" stroke-width="4.2" fill="none"/><path d="M849.2 654L851.2 656M859.2 654L857.2 656M849.2 664L851.2 662M859.2 664L857.2 662" stroke="#2b80f5" stroke-width="1" fill="none"/>
<rect x="1862.5" y="648.5" width="32" height="30" rx="3" fill="#fff" stroke="#ccc"/>
<path d="M1878 656.3V670.7M1870.8 663.5H1885.2" stroke="#111" stroke-width="3" fill="none"/>
<rect x="1869.5" y="764.8" width="38" height="17.2" rx="3" fill="#eaeaea" stroke="#ccc"/>
<text x="1871.3" y="780.7" font-size="18" fill="#111">27.2</text>
<rect x="1808.5" y="961.3" width="91" height="16.8" rx="3" fill="#eaeaea" stroke="#ccc"/>
<text x="1810.5" y="977" font-size="17.4" fill="#111">2018/10/01</text>
<circle cx="313" cy="997" r="9.5" fill="#eee" stroke="#777" stroke-width="1.5"/>
<circle cx="1893" cy="999" r="9.5" fill="#eee" stroke="#777" stroke-width="1.5"/>
</svg>
</body></html>
